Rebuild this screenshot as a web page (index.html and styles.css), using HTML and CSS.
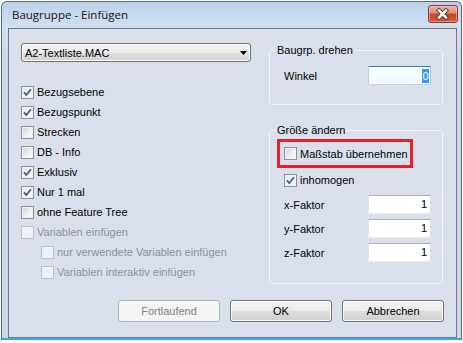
FILE: index.html
```html
<!DOCTYPE html>
<html lang="de">
<head>
<meta charset="utf-8">
<title>Baugruppe - Einfügen</title>
<link rel="stylesheet" href="styles.css">
</head>
<body>
<div class="window">
  <div class="titlebar">
    <span class="title">Baugruppe - Einfügen</span>
    <span class="close">
      <svg width="30" height="18" viewBox="0 0 30 18">
        <path d="M11.5 5.5 L18.5 12.5 M18.5 5.5 L11.5 12.5" stroke="#5a3a34" stroke-width="4.6" stroke-linecap="square" fill="none"/>
        <path d="M11.5 5.5 L18.5 12.5 M18.5 5.5 L11.5 12.5" stroke="#ffffff" stroke-width="2.6" stroke-linecap="square" fill="none"/>
      </svg>
    </span>
  </div>
  <div class="client">
    <div class="main">
      <div class="left">
        <div class="combo">
          <span>A2-Textliste.MAC</span>
          <svg class="arrow" width="7" height="4" viewBox="0 0 7 4"><polygon points="0,0 7,0 3.5,4" fill="#000"/></svg>
        </div>
        <div class="checks">
          <div class="cb on"><span class="box"><svg width="11" height="11" viewBox="0 0 11 11"><path d="M2 5.3 L4.3 8 L9 2.2" stroke="#4a5d9b" stroke-width="1.8" fill="none"/></svg></span>Bezugsebene</div>
          <div class="cb on"><span class="box"><svg width="11" height="11" viewBox="0 0 11 11"><path d="M2 5.3 L4.3 8 L9 2.2" stroke="#4a5d9b" stroke-width="1.8" fill="none"/></svg></span>Bezugspunkt</div>
          <div class="cb"><span class="box"></span>Strecken</div>
          <div class="cb"><span class="box"></span>DB - Info</div>
          <div class="cb on"><span class="box"><svg width="11" height="11" viewBox="0 0 11 11"><path d="M2 5.3 L4.3 8 L9 2.2" stroke="#4a5d9b" stroke-width="1.8" fill="none"/></svg></span>Exklusiv</div>
          <div class="cb on"><span class="box"><svg width="11" height="11" viewBox="0 0 11 11"><path d="M2 5.3 L4.3 8 L9 2.2" stroke="#4a5d9b" stroke-width="1.8" fill="none"/></svg></span>Nur 1 mal</div>
          <div class="cb"><span class="box"></span>ohne Feature Tree</div>
          <div class="cb dis"><span class="box"></span>Variablen einfügen</div>
          <div class="cb dis sub"><span class="box"></span>nur verwendete Variablen einfügen</div>
          <div class="cb dis sub"><span class="box"></span>Variablen interaktiv einfügen</div>
        </div>
      </div>
      <div class="right">
        <fieldset class="group g1">
          <legend>Baugrp. drehen</legend>
          <div class="field"><span>Winkel</span><span class="input focus"><span class="sel">0</span></span></div>
        </fieldset>
        <fieldset class="group g2">
          <legend>Größe ändern</legend>
          <div class="mark"><div class="cb"><span class="box"></span>Maßstab übernehmen</div></div>
          <div class="cb on inner"><span class="box"><svg width="11" height="11" viewBox="0 0 11 11"><path d="M2 5.3 L4.3 8 L9 2.2" stroke="#4a5d9b" stroke-width="1.8" fill="none"/></svg></span>inhomogen</div>
          <div class="field first"><span>x-Faktor</span><span class="input">1</span></div>
          <div class="field"><span>y-Faktor</span><span class="input">1</span></div>
          <div class="field"><span>z-Faktor</span><span class="input">1</span></div>
        </fieldset>
      </div>
    </div>
    <div class="buttons">
      <button class="btn disabled">Fortlaufend</button>
      <button class="btn">OK</button>
      <button class="btn">Abbrechen</button>
    </div>
  </div>
</div>
</body>
</html>
```
FILE: styles.css
```css
* { box-sizing: border-box; }
html, body { margin: 0; padding: 0; background: #ffffff; }
body {
  font-family: "Liberation Sans", Arial, sans-serif;
  font-size: 11px;
  color: #000;
}
.window {
  margin: 1px 0 0 1px;
  width: 461px;
  height: 339px;
  border: 1px solid #58677c;
  border-bottom: 2px solid #3aa8da;
  border-radius: 6px 6px 0 0;
  background: linear-gradient(#bcd2eb 0px, #d2e0f0 26px, #cad8ea 60px, #cad8ea 100%);
  display: flex;
  flex-direction: column;
}
.titlebar {
  height: 26px;
  display: flex;
  align-items: flex-start;
  padding: 0 3px 0 10px;
}
.title {
  font-family: "Open Sans", "Noto Sans", sans-serif;
  font-size: 11.5px;
  line-height: 26px;
  color: #141414;
}
.close {
  margin-left: auto;
  margin-top: 3px;
  width: 30px;
  height: 18px;
  border: 1px solid #8a3a2c;
  border-radius: 3px;
  background: linear-gradient(#eab4a8 0%, #de8e7b 42%, #c8462d 52%, #cf5a3c 100%);
  box-shadow: inset 0 0 0 1px rgba(255,220,210,0.45);
  display: flex;
}
.close svg { margin: -1px 0 0 -1px; }
.client {
  flex: 1;
  margin: 0 4px 0 6px;
  border: 1px solid #6d7b8f;
  background: #d9e0ec;
  padding: 14px 12px 15px;
  display: flex;
  flex-direction: column;
}
.main {
  display: grid;
  grid-template-columns: 230px 174px;
  column-gap: 18px;
  align-items: start;
}
.combo {
  height: 19px;
  border: 1px solid #707070;
  border-radius: 3px;
  background: linear-gradient(#f3f3f3 0%, #ececec 50%, #dfdfdf 51%, #d3d3d3 100%);
  box-shadow: inset 0 0 0 1px #fbfbfb;
  display: flex;
  align-items: center;
  padding: 0 3px 0 3px;
}
.combo .arrow { margin-left: auto; }
.checks { margin-top: 20px; }
.cb {
  display: flex;
  align-items: center;
  gap: 3px;
  height: 20px;
  white-space: nowrap;
}
.cb.sub { padding-left: 20px; }
.box {
  width: 13px;
  height: 13px;
  flex: none;
  border: 1px solid #8e8f90;
  background: linear-gradient(135deg, #cdd0d5 0%, #eceef0 55%, #fbfbfb 100%);
  box-shadow: inset 0 0 0 1px #f2f3f4;
  display: flex;
}
.cb.on .box { background: linear-gradient(135deg, #e2e4e8 0%, #f6f6f7 60%, #fdfdfd 100%); }
.cb.dis { color: #8c9097; }
.cb.dis .box {
  border-color: #bcc1c9;
  background: #eef1f5;
  box-shadow: none;
}
.group {
  margin: 0;
  min-width: 0;
  border: 1px solid #f1f4f9;
  border-radius: 3px;
  padding: 9px 11px 19px 7px;
}
.group legend {
  padding: 0 1px;
  margin-left: -1px;
  line-height: 13px;
  font-size: 11px;
}
.g1 { margin-top: 1px; }
.g2 { margin-top: 19px; padding-top: 2px; padding-bottom: 21px; }
.field {
  display: flex;
  align-items: center;
  justify-content: space-between;
  height: 19px;
  padding-left: 7px;
}
.field.first { margin-top: 5px; }
.field + .field { margin-top: 5px; }
.input {
  width: 63px;
  height: 19px;
  background: #ffffff;
  border: 1px solid;
  border-color: #abadb3 #dbdfe6 #e3e9ef #e2e3ea;
  text-align: right;
  padding-right: 3px;
  line-height: 17px;
}
.input.focus {
  border-color: #3d7bad #a4c9e3 #b7d9ed #b5cfe7;
  background: #f4fcff;
  padding-right: 1px;
  display: flex;
  justify-content: flex-end;
  align-items: center;
}
.sel {
  background: #3399ff;
  color: #fff;
  line-height: 14px;
  padding: 0 0.5px;
}
.mark {
  width: 136px;
  height: 29px;
  border: 3px solid #e61f2b;
  display: flex;
  align-items: center;
  padding-left: 4px;
}
.cb.inner { margin-top: 2px; padding-left: 7px; }
.buttons {
  margin-top: auto;
  display: flex;
  justify-content: flex-end;
  gap: 10px;
}
.btn {
  width: 102px;
  height: 22px;
  border: 1px solid #707070;
  border-radius: 3px;
  background: linear-gradient(#f2f2f2 0%, #ebebeb 50%, #dddddd 51%, #cfcfcf 100%);
  box-shadow: inset 0 0 0 1px #fbfbfb;
  font-family: "Liberation Sans", Arial, sans-serif;
  font-size: 11px;
  color: #000;
  padding: 0;
}
.btn.disabled {
  border-color: #adb2b5;
  background: #f4f4f4;
  box-shadow: none;
  color: #838383;
}
```
